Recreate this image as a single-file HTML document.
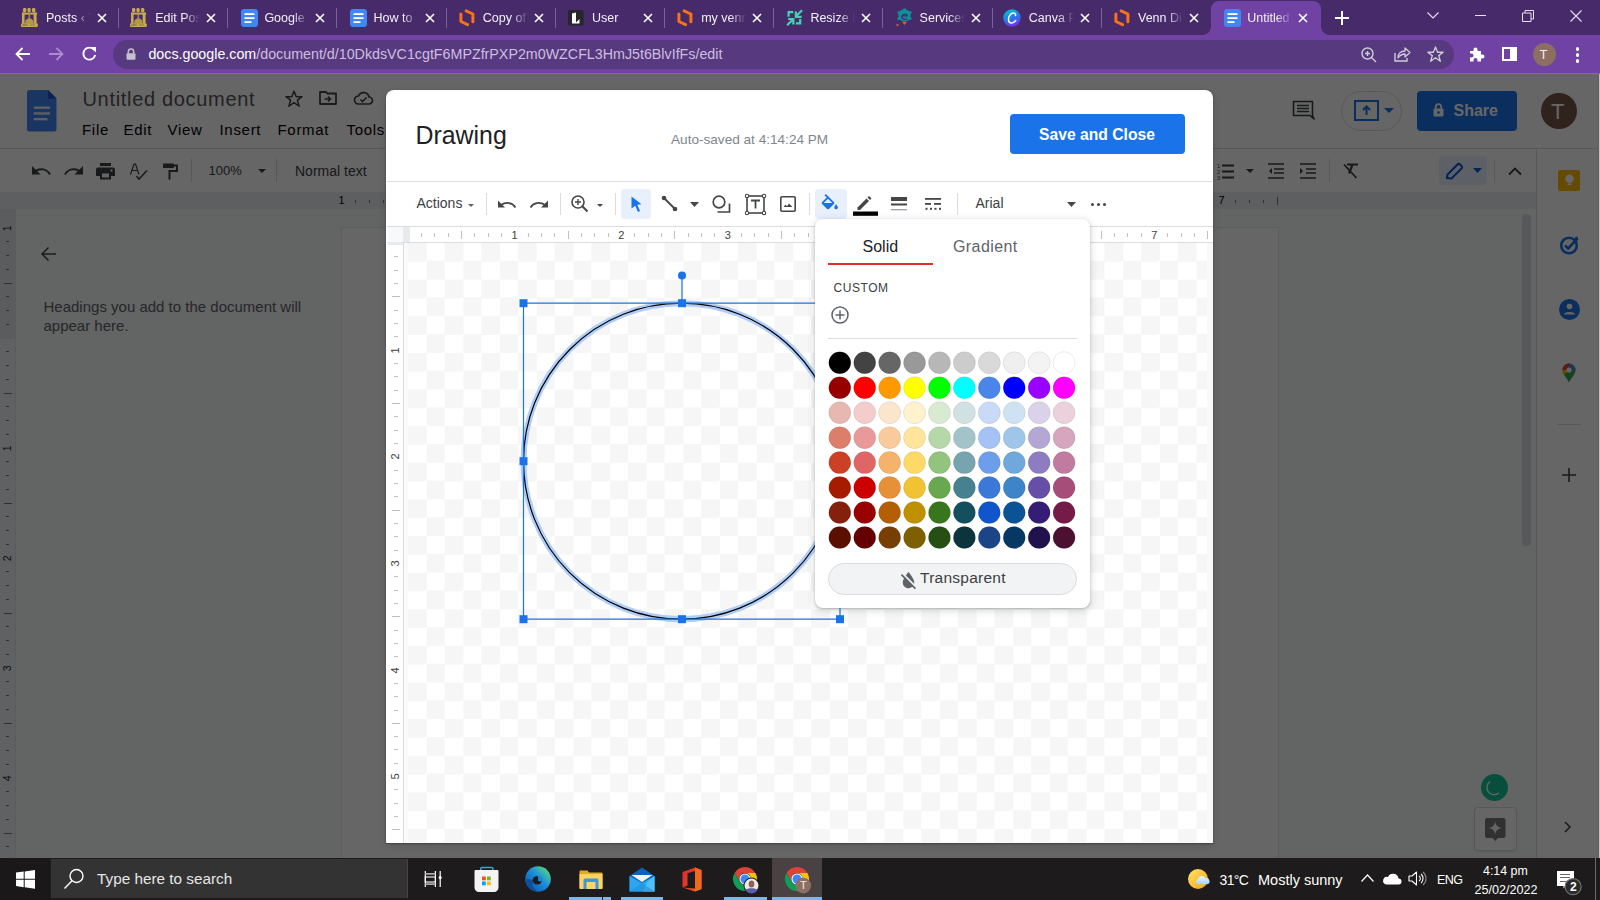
<!DOCTYPE html><html><head><meta charset="utf-8"><style>
*{margin:0;padding:0;box-sizing:border-box}
html,body{width:1600px;height:900px;overflow:hidden;background:#666}
body{position:relative;font-family:"Liberation Sans",sans-serif}
.a{position:absolute}
.t{position:absolute;white-space:nowrap;line-height:1}
svg{position:absolute;overflow:visible}
</style></head><body>
<div class="a" style="left:0;top:0;width:1600px;height:35px;background:#462a69"></div>
<div class="a" style="left:0;top:35px;width:1600px;height:39px;background:#6f42a4"></div>
<div class="a" style="left:0;top:73px;width:1600px;height:1px;background:#8a62bd"></div>
<div class="a" style="left:1211px;top:1px;width:110px;height:35px;background:#6f42a4;border-radius:8px 8px 0 0"></div>
<div class="a" style="left:1203px;top:27px;width:8px;height:8px;background:radial-gradient(circle at 0 0,#462a69 7.5px,#6f42a4 8px)"></div>
<div class="a" style="left:1321px;top:27px;width:8px;height:8px;background:radial-gradient(circle at 100% 0,#462a69 7.5px,#6f42a4 8px)"></div>
<div class="t" style="left:46.0px;top:11px;width:47px;height:16px;overflow:hidden;color:#f4f0fa;font-size:12.5px;line-height:14px;-webkit-mask-image:linear-gradient(90deg,#000 62%,transparent 96%)">Posts ‹ T</div>
<svg style="left:97.0px;top:12.5px" width="10" height="10" viewBox="0 0 10 10"><path d="M1 1L9 9M9 1L1 9" stroke="#fff" stroke-width="1.6"/></svg>
<div class="a" style="left:118.0px;top:8px;width:1px;height:20px;background:#7a619a"></div>
<svg style="left:21.0px;top:8px" width="17" height="19" viewBox="0 0 17 19"><g fill="#c6ab4a"><rect x="2" y="0" width="3.3" height="4.2" rx="1.2"/><rect x="6.5" y="0" width="3.2" height="4.2" rx="1.2"/><rect x="11" y="0" width="3.3" height="4.2" rx="1.2"/><rect x="1" y="4.6" width="15" height="2"/><rect x="1" y="4.6" width="2.6" height="11"/><rect x="12.6" y="4.6" width="3" height="11"/><path d="M4.3 15.5V12.5Q8.3 7.5 12.2 12.5V15.5Z" fill="#b09848"/><rect x="7.5" y="6" width="1.6" height="4" fill="#9a8650"/><rect x="0" y="15.3" width="16.8" height="3.7" rx="1"/></g><rect x="1.3" y="16.5" width="5.5" height="1" fill="#6a5a6a"/><rect x="9" y="16.5" width="5" height="1" fill="#8a7a5a"/></svg>
<div class="t" style="left:155.2px;top:11px;width:47px;height:16px;overflow:hidden;color:#f4f0fa;font-size:12.5px;line-height:14px;-webkit-mask-image:linear-gradient(90deg,#000 62%,transparent 96%)">Edit Post</div>
<svg style="left:206.2px;top:12.5px" width="10" height="10" viewBox="0 0 10 10"><path d="M1 1L9 9M9 1L1 9" stroke="#fff" stroke-width="1.6"/></svg>
<div class="a" style="left:227.2px;top:8px;width:1px;height:20px;background:#7a619a"></div>
<svg style="left:130.2px;top:8px" width="17" height="19" viewBox="0 0 17 19"><g fill="#c6ab4a"><rect x="2" y="0" width="3.3" height="4.2" rx="1.2"/><rect x="6.5" y="0" width="3.2" height="4.2" rx="1.2"/><rect x="11" y="0" width="3.3" height="4.2" rx="1.2"/><rect x="1" y="4.6" width="15" height="2"/><rect x="1" y="4.6" width="2.6" height="11"/><rect x="12.6" y="4.6" width="3" height="11"/><path d="M4.3 15.5V12.5Q8.3 7.5 12.2 12.5V15.5Z" fill="#b09848"/><rect x="7.5" y="6" width="1.6" height="4" fill="#9a8650"/><rect x="0" y="15.3" width="16.8" height="3.7" rx="1"/></g><rect x="1.3" y="16.5" width="5.5" height="1" fill="#6a5a6a"/><rect x="9" y="16.5" width="5" height="1" fill="#8a7a5a"/></svg>
<div class="t" style="left:264.4px;top:11px;width:47px;height:16px;overflow:hidden;color:#f4f0fa;font-size:12.5px;line-height:14px;-webkit-mask-image:linear-gradient(90deg,#000 62%,transparent 96%)">Google Docs</div>
<svg style="left:315.4px;top:12.5px" width="10" height="10" viewBox="0 0 10 10"><path d="M1 1L9 9M9 1L1 9" stroke="#fff" stroke-width="1.6"/></svg>
<div class="a" style="left:336.4px;top:8px;width:1px;height:20px;background:#7a619a"></div>
<svg style="left:240.9px;top:9px" width="17" height="18" viewBox="0 0 17 18"><rect x="0" y="0" width="17" height="18" rx="3" fill="#4285f4"/><rect x="3.5" y="4.2" width="10" height="1.8" fill="#fff"/><rect x="3.5" y="8.2" width="10" height="1.8" fill="#fff"/><rect x="3.5" y="12.2" width="7" height="1.8" fill="#fff"/></svg>
<div class="t" style="left:373.6px;top:11px;width:47px;height:16px;overflow:hidden;color:#f4f0fa;font-size:12.5px;line-height:14px;-webkit-mask-image:linear-gradient(90deg,#000 62%,transparent 96%)">How to</div>
<svg style="left:424.6px;top:12.5px" width="10" height="10" viewBox="0 0 10 10"><path d="M1 1L9 9M9 1L1 9" stroke="#fff" stroke-width="1.6"/></svg>
<div class="a" style="left:445.6px;top:8px;width:1px;height:20px;background:#7a619a"></div>
<svg style="left:350.1px;top:9px" width="17" height="18" viewBox="0 0 17 18"><rect x="0" y="0" width="17" height="18" rx="3" fill="#4285f4"/><rect x="3.5" y="4.2" width="10" height="1.8" fill="#fff"/><rect x="3.5" y="8.2" width="10" height="1.8" fill="#fff"/><rect x="3.5" y="12.2" width="7" height="1.8" fill="#fff"/></svg>
<div class="t" style="left:482.8px;top:11px;width:47px;height:16px;overflow:hidden;color:#f4f0fa;font-size:12.5px;line-height:14px;-webkit-mask-image:linear-gradient(90deg,#000 62%,transparent 96%)">Copy of Venn</div>
<svg style="left:533.8px;top:12.5px" width="10" height="10" viewBox="0 0 10 10"><path d="M1 1L9 9M9 1L1 9" stroke="#fff" stroke-width="1.6"/></svg>
<div class="a" style="left:554.8px;top:8px;width:1px;height:20px;background:#7a619a"></div>
<svg style="left:457.8px;top:9px" width="17" height="18" viewBox="0 0 17 18"><path d="M2.9 5V12.5L9.6 15.6M8.1 1.9L14.9 5V12.8" fill="none" stroke="#f97316" stroke-width="3" stroke-linecap="round" stroke-linejoin="round"/></svg>
<div class="t" style="left:592.0px;top:11px;width:47px;height:16px;overflow:hidden;color:#f4f0fa;font-size:12.5px;line-height:14px;-webkit-mask-image:linear-gradient(90deg,#000 62%,transparent 96%)">User</div>
<svg style="left:643.0px;top:12.5px" width="10" height="10" viewBox="0 0 10 10"><path d="M1 1L9 9M9 1L1 9" stroke="#fff" stroke-width="1.6"/></svg>
<div class="a" style="left:664.0px;top:8px;width:1px;height:20px;background:#7a619a"></div>
<svg style="left:567.5px;top:10px" width="16" height="16" viewBox="0 0 16 16"><rect width="15.6" height="15.5" rx="2.5" fill="#25272a"/><path d="M4 3.5L8 2.5V13.5H4Z" fill="#fff"/><path d="M8 12.5L11.5 9V13.5H8Z" fill="#fff"/></svg>
<div class="t" style="left:701.2px;top:11px;width:47px;height:16px;overflow:hidden;color:#f4f0fa;font-size:12.5px;line-height:14px;-webkit-mask-image:linear-gradient(90deg,#000 62%,transparent 96%)">my venn dia</div>
<svg style="left:752.2px;top:12.5px" width="10" height="10" viewBox="0 0 10 10"><path d="M1 1L9 9M9 1L1 9" stroke="#fff" stroke-width="1.6"/></svg>
<div class="a" style="left:773.2px;top:8px;width:1px;height:20px;background:#7a619a"></div>
<svg style="left:676.2px;top:9px" width="17" height="18" viewBox="0 0 17 18"><path d="M2.9 5V12.5L9.6 15.6M8.1 1.9L14.9 5V12.8" fill="none" stroke="#f97316" stroke-width="3" stroke-linecap="round" stroke-linejoin="round"/></svg>
<div class="t" style="left:810.4px;top:11px;width:47px;height:16px;overflow:hidden;color:#f4f0fa;font-size:12.5px;line-height:14px;-webkit-mask-image:linear-gradient(90deg,#000 62%,transparent 96%)">Resize Image</div>
<svg style="left:861.4px;top:12.5px" width="10" height="10" viewBox="0 0 10 10"><path d="M1 1L9 9M9 1L1 9" stroke="#fff" stroke-width="1.6"/></svg>
<div class="a" style="left:882.4px;top:8px;width:1px;height:20px;background:#7a619a"></div>
<svg style="left:785.4px;top:9px" width="18" height="18" viewBox="0 0 18 18"><path d="M3.6 7.8V3.1H8.35M17.1 1.25L11.5 6.8M10.85 2.5V7.8H16.6M2.1 16.25L7.6 10.75M3.1 10H8.35V15.5M15.2 10V14.4H10.85" fill="none" stroke="#44d2b0" stroke-width="2.2"/></svg>
<div class="t" style="left:919.6px;top:11px;width:47px;height:16px;overflow:hidden;color:#f4f0fa;font-size:12.5px;line-height:14px;-webkit-mask-image:linear-gradient(90deg,#000 62%,transparent 96%)">Services</div>
<svg style="left:970.6px;top:12.5px" width="10" height="10" viewBox="0 0 10 10"><path d="M1 1L9 9M9 1L1 9" stroke="#fff" stroke-width="1.6"/></svg>
<div class="a" style="left:991.6px;top:8px;width:1px;height:20px;background:#7a619a"></div>
<svg style="left:894.6px;top:8px" width="17" height="19" viewBox="0 0 17 19"><circle cx="9.5" cy="7.5" r="6.2" fill="#0e8f9a"/><circle cx="9.5" cy="1.8" r="1.6" fill="#0e8f9a"/><circle cx="4" cy="4.5" r="1.6" fill="#0e8f9a"/><circle cx="15" cy="4.5" r="1.6" fill="#0e8f9a"/><circle cx="4" cy="10.5" r="1.6" fill="#0e8f9a"/><circle cx="15" cy="10.5" r="1.6" fill="#0e8f9a"/><path d="M6.5 7.8H12.5M12.5 7.8A3 2.5 0 1 0 12 10.5" fill="none" stroke="#452a69" stroke-width="1.3"/><path d="M7 14H12L9.5 17Z" fill="#e55a2b"/><circle cx="2.5" cy="17" r="1.2" fill="#c05a3a"/></svg>
<div class="t" style="left:1028.8px;top:11px;width:47px;height:16px;overflow:hidden;color:#f4f0fa;font-size:12.5px;line-height:14px;-webkit-mask-image:linear-gradient(90deg,#000 62%,transparent 96%)">Canva Pro</div>
<svg style="left:1079.8px;top:12.5px" width="10" height="10" viewBox="0 0 10 10"><path d="M1 1L9 9M9 1L1 9" stroke="#fff" stroke-width="1.6"/></svg>
<div class="a" style="left:1100.8px;top:8px;width:1px;height:20px;background:#7a619a"></div>
<svg style="left:1002.8px;top:9px" width="18" height="18" viewBox="0 0 18 18"><defs><linearGradient id="cg" x1="0.3" y1="0" x2="0.7" y2="1"><stop offset="0" stop-color="#00c4cc"/><stop offset="0.55" stop-color="#2f6ff0"/><stop offset="1" stop-color="#7d2ae8"/></linearGradient></defs><circle cx="9" cy="9" r="8.7" fill="url(#cg)"/><path d="M12.5 6.5C13 4.5 11.5 4 10.5 4C7.5 4 5.5 7.5 5.5 10.5C5.5 12.5 6.5 14 8.5 14C10.5 14 12 12.5 12.8 11.5" fill="none" stroke="#fff" stroke-width="1.5" stroke-linecap="round"/></svg>
<div class="t" style="left:1138.0px;top:11px;width:47px;height:16px;overflow:hidden;color:#f4f0fa;font-size:12.5px;line-height:14px;-webkit-mask-image:linear-gradient(90deg,#000 62%,transparent 96%)">Venn Diagram</div>
<svg style="left:1189.0px;top:12.5px" width="10" height="10" viewBox="0 0 10 10"><path d="M1 1L9 9M9 1L1 9" stroke="#fff" stroke-width="1.6"/></svg>
<svg style="left:1113.0px;top:9px" width="17" height="18" viewBox="0 0 17 18"><path d="M2.9 5V12.5L9.6 15.6M8.1 1.9L14.9 5V12.8" fill="none" stroke="#f97316" stroke-width="3" stroke-linecap="round" stroke-linejoin="round"/></svg>
<div class="t" style="left:1247.2px;top:11px;width:47px;height:16px;overflow:hidden;color:#f4f0fa;font-size:12.5px;line-height:14px;-webkit-mask-image:linear-gradient(90deg,#000 62%,transparent 96%)">Untitled document</div>
<svg style="left:1298.2px;top:12.5px" width="10" height="10" viewBox="0 0 10 10"><path d="M1 1L9 9M9 1L1 9" stroke="#fff" stroke-width="1.6"/></svg>
<svg style="left:1223.7px;top:9px" width="17" height="18" viewBox="0 0 17 18"><rect x="0" y="0" width="17" height="18" rx="3" fill="#4285f4"/><rect x="3.5" y="4.2" width="10" height="1.8" fill="#fff"/><rect x="3.5" y="8.2" width="10" height="1.8" fill="#fff"/><rect x="3.5" y="12.2" width="7" height="1.8" fill="#fff"/></svg>
<svg style="left:1335px;top:11px" width="14" height="14" viewBox="0 0 14 14"><path d="M7 0V14M0 7H14" stroke="#fff" stroke-width="2"/></svg>
<svg style="left:1427px;top:12px" width="12" height="7" viewBox="0 0 12 7"><path d="M0.5 0.5L6 6L11.5 0.5" fill="none" stroke="#e8e0f0" stroke-width="1.1"/></svg>
<div class="a" style="left:1475px;top:14.5px;width:10.5px;height:1.6px;background:#e8e0f0"></div>
<svg style="left:1522px;top:9.5px" width="12" height="12" viewBox="0 0 12 12"><path d="M0.5 3H9V11.5H0.5Z M3 3V0.5H11.5V9H9" fill="none" stroke="#e8e0f0" stroke-width="1"/></svg>
<svg style="left:1570px;top:9.5px" width="12" height="12" viewBox="0 0 12 12"><path d="M0.5 0.5L11.5 11.5M11.5 0.5L0.5 11.5" fill="none" stroke="#e8e0f0" stroke-width="1.1"/></svg>
<svg style="left:15px;top:46.5px" width="15" height="14" viewBox="0 0 15 14"><path d="M15 7H2M7.5 1L1.5 7L7.5 13" fill="none" stroke="#fff" stroke-width="1.8"/></svg>
<svg style="left:49px;top:46.5px" width="15" height="14" viewBox="0 0 15 14"><path d="M0 7H13M7.5 1L13.5 7L7.5 13" fill="none" stroke="#a98bd0" stroke-width="1.8"/></svg>
<svg style="left:82px;top:46px" width="15" height="15" viewBox="0 0 15 15"><path d="M12.3 4.2A6 6 0 1 0 13.2 9" fill="none" stroke="#fff" stroke-width="1.8"/><path d="M8.5 1H14V6.5Z" fill="#fff"/></svg>
<div class="a" style="left:112.5px;top:40px;width:1341.5px;height:28.5px;background:#56397e;border-radius:14.25px"></div>
<svg style="left:126px;top:48px" width="10" height="12" viewBox="0 0 10 12"><path d="M2.3 5.5V3.8A2.7 2.7 0 0 1 7.7 3.8V5.5" fill="none" stroke="#c6c2cc" stroke-width="1.5"/><rect x="0.5" y="5.3" width="9" height="6.5" rx="1" fill="#c6c2cc"/></svg>
<div class="t" style="left:148.4px;top:46.5px;font-size:14.27px;color:#fff;letter-spacing:0px" id="url"><span style="color:#fff">docs.google.com</span><span style="color:#cdbfe0">/document/d/10DkdsVC1cgtF6MPZfrPXP2m0WZCFL3HmJ5t6BlvIfFs/edit</span></div>
<svg style="left:1361px;top:47px" width="16" height="16" viewBox="0 0 16 16"><circle cx="6.5" cy="6.5" r="5.5" fill="none" stroke="#d0ccd8" stroke-width="1.4"/><path d="M10.5 10.5L15 15M6.5 4V9M4 6.5H9" stroke="#d0ccd8" stroke-width="1.4"/></svg>
<svg style="left:1394px;top:46px" width="17" height="16" viewBox="0 0 17 16"><path d="M1 7V15H13V12" fill="none" stroke="#d0ccd8" stroke-width="1.4"/><path d="M4 12C4 7 7 5 11 5V2L16 6.5L11 11V8C8 8 6 9 4 12Z" fill="none" stroke="#d0ccd8" stroke-width="1.3" stroke-linejoin="round"/></svg>
<svg style="left:1427px;top:46px" width="17" height="16" viewBox="0 0 24 23"><path d="M12 1.5L15 9H23L16.6 13.8L19 22L12 17L5 22L7.4 13.8L1 9H9Z" fill="none" stroke="#d0ccd8" stroke-width="1.9" stroke-linejoin="round"/></svg>
<svg style="left:1469px;top:46px" width="16" height="16" viewBox="0 0 16 16"><path d="M1 5H4.5V3.5A2 2 0 0 1 8.5 3.5V5H12V8.5H13.5A2 2 0 0 1 13.5 12.5H12V15.5H8.5V14A2 2 0 0 0 4.5 14V15.5H1V11.5H2.5A2 2 0 0 0 2.5 7.5H1Z" fill="#fff"/></svg>
<svg style="left:1502px;top:47px" width="15" height="14" viewBox="0 0 15 14"><rect x="1" y="1" width="13" height="12" fill="none" stroke="#fff" stroke-width="2"/><rect x="8" y="1" width="6" height="12" fill="#fff"/></svg>
<div class="a" style="left:1532.5px;top:42.5px;width:23px;height:23px;border-radius:50%;background:#8d6e63"></div>
<div class="t" style="left:1539.5px;top:47.5px;font-size:13px;color:#f2ece8">T</div>
<div class="a" style="left:1575.5px;top:47px;width:3.5px;height:3.5px;border-radius:50%;background:#fff;box-shadow:0 6px 0 #fff,0 12px 0 #fff"></div>
<div class="a" style="left:0;top:74px;width:1600px;height:784px;background:#f8f9fa"></div>
<div class="a" style="left:0;top:74px;width:1600px;height:74px;background:#fff"></div>
<div class="a" style="left:0;top:148px;width:1600px;height:1px;background:#dadce0"></div>
<div class="a" style="left:0;top:149px;width:1536px;height:43px;background:#fff"></div>
<svg style="left:26.5px;top:90px" width="30" height="42" viewBox="0 0 30 42"><path d="M2.5 0H21L29.5 8.5V39A2.5 2.5 0 0 1 27 41.5H2.5A2.5 2.5 0 0 1 0 39V2.5A2.5 2.5 0 0 1 2.5 0Z" fill="#4285f4"/><path d="M21 0V8.5H29.5Z" fill="#1a56c9"/><rect x="6.7" y="16.5" width="16.2" height="2.3" fill="#f1f1f1"/><rect x="6.7" y="22.3" width="16.2" height="2.3" fill="#f1f1f1"/><rect x="6.7" y="28" width="13.8" height="2.3" fill="#f1f1f1"/></svg>
<div class="t" style="left:82.5px;top:89px;font-size:20px;letter-spacing:0.68px;color:#555" id="doctitle">Untitled document</div>
<svg style="left:285px;top:89.5px" width="18" height="17" viewBox="0 0 24 23"><path d="M12 1.5L15 9H23L16.6 13.8L19 22L12 17L5 22L7.4 13.8L1 9H9Z" fill="none" stroke="#444" stroke-width="2" stroke-linejoin="round"/></svg>
<svg style="left:319px;top:91px" width="18" height="14" viewBox="0 0 18 14"><path d="M1 1H7L8.5 2.5H17V13H1Z" fill="none" stroke="#444" stroke-width="1.8" stroke-linejoin="round"/><path d="M5.5 8H11.5M9 5.5L11.5 8L9 10.5" fill="none" stroke="#444" stroke-width="1.6"/></svg>
<svg style="left:353.5px;top:92px" width="19" height="13" viewBox="0 0 19 13"><path d="M4.5 12H15A3.5 3.5 0 0 0 15 5A5.5 5.5 0 0 0 4.5 4A4 4 0 0 0 4.5 12Z" fill="none" stroke="#444" stroke-width="1.7"/><path d="M6.5 7.5L8.5 9.5L12.5 5.5" fill="none" stroke="#444" stroke-width="1.6"/></svg>
<div class="t" style="left:82px;top:122px;font-size:15px;letter-spacing:0.7px;color:#000">File</div>
<div class="t" style="left:123.5px;top:122px;font-size:15px;letter-spacing:0.7px;color:#000">Edit</div>
<div class="t" style="left:167.5px;top:122px;font-size:15px;letter-spacing:0.7px;color:#000">View</div>
<div class="t" style="left:219.5px;top:122px;font-size:15px;letter-spacing:0.7px;color:#000">Insert</div>
<div class="t" style="left:277.5px;top:122px;font-size:15px;letter-spacing:0.7px;color:#000">Format</div>
<div class="t" style="left:346.5px;top:122px;font-size:15px;letter-spacing:0.7px;color:#000">Tools</div>
<svg style="left:1292px;top:100px" width="22" height="20" viewBox="0 0 22 20"><path d="M1.5 1.5H20.5V15.5L22 19L18 15.5H1.5Z" fill="none" stroke="#3c4043" stroke-width="1.6" stroke-linejoin="round"/><path d="M5 5.5H17M5 8.5H17M5 11.5H17" stroke="#3c4043" stroke-width="1.6"/></svg>
<div class="a" style="left:1341px;top:90.5px;width:61px;height:40px;border:1px solid #dadce0;border-radius:20px"></div>
<svg style="left:1354px;top:100px" width="25" height="21" viewBox="0 0 25 21"><rect x="1" y="1" width="23" height="19" fill="none" stroke="#1a73e8" stroke-width="2"/><path d="M12.5 15V7M9 10L12.5 6.5L16 10" fill="none" stroke="#1a73e8" stroke-width="2"/></svg>
<svg style="left:1384px;top:108px" width="10" height="5" viewBox="0 0 10 5"><path d="M0 0H10L5 5Z" fill="#1a73e8"/></svg>
<div class="a" style="left:1417px;top:91px;width:100px;height:40px;background:#1a73e8;border-radius:4px"></div>
<svg style="left:1433px;top:102px" width="11" height="15" viewBox="0 0 11 15"><path d="M2.8 7V4.8A2.7 2.7 0 0 1 8.2 4.8V7" fill="none" stroke="#fff" stroke-width="1.8"/><rect x="0.5" y="6.5" width="10" height="8" rx="1" fill="#fff"/><circle cx="5.5" cy="10.5" r="1.3" fill="#1a73e8"/></svg>
<div class="t" style="left:1453.5px;top:103px;font-size:16px;color:#fff;font-weight:bold" id="share">Share</div>
<div class="a" style="left:1541px;top:92.5px;width:36px;height:36px;border-radius:50%;background:#795548"></div>
<div class="t" style="left:1551px;top:100.5px;font-size:22px;color:#fff">T</div>
<svg style="left:31.5px;top:165.5px" width="19" height="9" viewBox="0 0 19 9"><path d="M18 8.5C15 3 8 1.5 3 5.5" fill="none" stroke="#3c4043" stroke-width="1.9"/><path d="M0 0V8.5H8.5Z" fill="#3c4043"/></svg>
<svg style="left:64px;top:165.5px" width="19" height="9" viewBox="0 0 19 9"><path d="M1 8.5C4 3 11 1.5 16 5.5" fill="none" stroke="#3c4043" stroke-width="1.9"/><path d="M19 0V8.5H10.5Z" fill="#3c4043"/></svg>
<svg style="left:96px;top:163px" width="19" height="17" viewBox="0 0 19 17"><rect x="4" y="0" width="11" height="3" fill="#3c4043"/><path d="M2 4.5H17A2 2 0 0 1 19 6.5V13H15V16.5H4V13H0V6.5A2 2 0 0 1 2 4.5Z" fill="#3c4043"/><rect x="6" y="10.5" width="7" height="4" fill="#fff"/><rect x="14.5" y="6.5" width="2" height="2" fill="#fff"/></svg>
<svg style="left:130px;top:163px" width="18" height="18" viewBox="0 0 18 18"><path d="M0.5 11.5L4 1H5.5L9 11.5M2 7.5H7.5" fill="none" stroke="#3c4043" stroke-width="1.2"/><path d="M6.5 13L9 16L17 7.5" fill="none" stroke="#3c4043" stroke-width="1.5"/></svg>
<svg style="left:162.5px;top:163px" width="16" height="17" viewBox="0 0 16 17"><rect x="0" y="0.5" width="11" height="4.5" rx="0.7" fill="#3c4043"/><path d="M11 2.5H14V8H6.5V16.5" fill="none" stroke="#3c4043" stroke-width="2"/></svg>
<div class="a" style="left:191px;top:159px;width:1px;height:23px;background:#dadce0"></div>
<div class="t" style="left:208.5px;top:164px;font-size:13px;color:#3c4043" id="zoompct">100%</div>
<svg style="left:257.5px;top:169px" width="8" height="4" viewBox="0 0 8 4"><path d="M0 0H8L4 4Z" fill="#3c4043"/></svg>
<div class="a" style="left:275.5px;top:159px;width:1px;height:23px;background:#dadce0"></div>
<div class="t" style="left:295px;top:164px;font-size:14px;color:#3c4043" id="normtext">Normal text</div>
<svg style="left:1217px;top:163px" width="17" height="17" viewBox="0 0 17 17"><path d="M5 2.5H17M5 8.5H17M5 14.5H17" stroke="#3c4043" stroke-width="1.8"/><text x="0" y="5" font-size="5.5" font-family="Liberation Sans" fill="#3c4043">1</text><text x="0" y="11" font-size="5.5" font-family="Liberation Sans" fill="#3c4043">2</text><text x="0" y="17" font-size="5.5" font-family="Liberation Sans" fill="#3c4043">3</text></svg>
<svg style="left:1246px;top:169px" width="8" height="4" viewBox="0 0 8 4"><path d="M0 0H8L4 4Z" fill="#3c4043"/></svg>
<svg style="left:1268px;top:163px" width="16" height="16" viewBox="0 0 16 16"><path d="M0 1H16M6 6H16M6 10H16M0 15H16" stroke="#3c4043" stroke-width="1.7"/><path d="M4 5V11L1 8Z" fill="#3c4043"/></svg>
<svg style="left:1300px;top:163px" width="16" height="16" viewBox="0 0 16 16"><path d="M0 1H16M6 6H16M6 10H16M0 15H16" stroke="#3c4043" stroke-width="1.7"/><path d="M0 5V11L3 8Z" fill="#3c4043"/></svg>
<div class="a" style="left:1329px;top:159px;width:1px;height:23px;background:#dadce0"></div>
<svg style="left:1343px;top:163px" width="16" height="16" viewBox="0 0 16 16"><path d="M4 1.5H15M9.5 1.5L6 10.5" stroke="#3c4043" stroke-width="2.2"/><path d="M1 1.5L13.5 15" stroke="#3c4043" stroke-width="1.8"/></svg>
<div class="a" style="left:1438.5px;top:155.5px;width:48px;height:29px;background:#e8f0fe;border-radius:4px"></div>
<svg style="left:1446px;top:162.5px" width="17" height="16" viewBox="0 0 17 16"><path d="M1 15L1.5 11.5L11.5 1.5A1.5 1.5 0 0 1 14 1.5L15.5 3A1.5 1.5 0 0 1 15.5 5.5L5.5 15.5Z" fill="none" stroke="#0b57d0" stroke-width="2"/></svg>
<svg style="left:1473px;top:168px" width="9" height="5" viewBox="0 0 9 5"><path d="M0 0H9L4.5 5Z" fill="#0b57d0"/></svg>
<div class="a" style="left:1493.5px;top:159.5px;width:1px;height:23px;background:#dadce0"></div>
<svg style="left:1508px;top:166.5px" width="14" height="8" viewBox="0 0 14 8"><path d="M1 7.5L7 1.5L13 7.5" fill="none" stroke="#3c4043" stroke-width="1.9"/></svg>
<div class="a" style="left:0;top:192px;width:1536px;height:16.5px;background:#eaedf0"></div>
<div class="t" style="left:338.4px;top:195px;font-size:11px;color:#000">1</div>
<div class="t" style="left:1218.4px;top:195px;font-size:11px;color:#000">7</div>
<div class="a" style="left:355.15px;top:199.5px;width:1px;height:3px;background:#777"></div>
<div class="a" style="left:368.9px;top:199.5px;width:1px;height:3px;background:#777"></div>
<div class="a" style="left:382.65px;top:199.5px;width:1px;height:3px;background:#777"></div>
<div class="a" style="left:1235.15px;top:199.5px;width:1px;height:3px;background:#777"></div>
<div class="a" style="left:1248.9px;top:199.5px;width:1px;height:3px;background:#777"></div>
<div class="a" style="left:1262.65px;top:199.5px;width:1px;height:3px;background:#777"></div>
<div class="a" style="left:1276.5px;top:197px;width:1px;height:8px;background:#777"></div>
<div class="a" style="left:0;top:208.5px;width:16px;height:650px;background:#f1f3f4;border-right:1px solid #e3e5e8"></div>
<div class="a" style="left:0;top:208.5px;width:15px;height:130px;background:#e4e6e9"></div>
<div class="t" style="left:2px;top:222.5px;font-size:10.5px;color:#222;transform:rotate(-90deg);width:11px;text-align:center">1</div>
<div class="a" style="left:5.5px;top:241.2px;width:3.5px;height:1px;background:#777"></div>
<div class="a" style="left:5.5px;top:255.0px;width:3.5px;height:1px;background:#777"></div>
<div class="a" style="left:5.5px;top:268.8px;width:3.5px;height:1px;background:#777"></div>
<div class="a" style="left:3.5px;top:282.5px;width:8px;height:1px;background:#777"></div>
<div class="a" style="left:5.5px;top:296.2px;width:3.5px;height:1px;background:#777"></div>
<div class="a" style="left:5.5px;top:310.0px;width:3.5px;height:1px;background:#777"></div>
<div class="a" style="left:5.5px;top:323.8px;width:3.5px;height:1px;background:#777"></div>
<div class="a" style="left:5.5px;top:351.2px;width:3.5px;height:1px;background:#777"></div>
<div class="a" style="left:5.5px;top:365.0px;width:3.5px;height:1px;background:#777"></div>
<div class="a" style="left:5.5px;top:378.8px;width:3.5px;height:1px;background:#777"></div>
<div class="a" style="left:3.5px;top:392.5px;width:8px;height:1px;background:#777"></div>
<div class="a" style="left:5.5px;top:406.2px;width:3.5px;height:1px;background:#777"></div>
<div class="a" style="left:5.5px;top:420.0px;width:3.5px;height:1px;background:#777"></div>
<div class="a" style="left:5.5px;top:433.8px;width:3.5px;height:1px;background:#777"></div>
<div class="t" style="left:2px;top:442.5px;font-size:10.5px;color:#222;transform:rotate(-90deg);width:11px;text-align:center">1</div>
<div class="a" style="left:5.5px;top:461.2px;width:3.5px;height:1px;background:#777"></div>
<div class="a" style="left:5.5px;top:475.0px;width:3.5px;height:1px;background:#777"></div>
<div class="a" style="left:5.5px;top:488.8px;width:3.5px;height:1px;background:#777"></div>
<div class="a" style="left:3.5px;top:502.5px;width:8px;height:1px;background:#777"></div>
<div class="a" style="left:5.5px;top:516.2px;width:3.5px;height:1px;background:#777"></div>
<div class="a" style="left:5.5px;top:530.0px;width:3.5px;height:1px;background:#777"></div>
<div class="a" style="left:5.5px;top:543.8px;width:3.5px;height:1px;background:#777"></div>
<div class="t" style="left:2px;top:552.5px;font-size:10.5px;color:#222;transform:rotate(-90deg);width:11px;text-align:center">2</div>
<div class="a" style="left:5.5px;top:571.2px;width:3.5px;height:1px;background:#777"></div>
<div class="a" style="left:5.5px;top:585.0px;width:3.5px;height:1px;background:#777"></div>
<div class="a" style="left:5.5px;top:598.8px;width:3.5px;height:1px;background:#777"></div>
<div class="a" style="left:3.5px;top:612.5px;width:8px;height:1px;background:#777"></div>
<div class="a" style="left:5.5px;top:626.2px;width:3.5px;height:1px;background:#777"></div>
<div class="a" style="left:5.5px;top:640.0px;width:3.5px;height:1px;background:#777"></div>
<div class="a" style="left:5.5px;top:653.8px;width:3.5px;height:1px;background:#777"></div>
<div class="t" style="left:2px;top:662.5px;font-size:10.5px;color:#222;transform:rotate(-90deg);width:11px;text-align:center">3</div>
<div class="a" style="left:5.5px;top:681.2px;width:3.5px;height:1px;background:#777"></div>
<div class="a" style="left:5.5px;top:695.0px;width:3.5px;height:1px;background:#777"></div>
<div class="a" style="left:5.5px;top:708.8px;width:3.5px;height:1px;background:#777"></div>
<div class="a" style="left:3.5px;top:722.5px;width:8px;height:1px;background:#777"></div>
<div class="a" style="left:5.5px;top:736.2px;width:3.5px;height:1px;background:#777"></div>
<div class="a" style="left:5.5px;top:750.0px;width:3.5px;height:1px;background:#777"></div>
<div class="a" style="left:5.5px;top:763.8px;width:3.5px;height:1px;background:#777"></div>
<div class="t" style="left:2px;top:772.5px;font-size:10.5px;color:#222;transform:rotate(-90deg);width:11px;text-align:center">4</div>
<div class="a" style="left:5.5px;top:791.2px;width:3.5px;height:1px;background:#777"></div>
<div class="a" style="left:5.5px;top:805.0px;width:3.5px;height:1px;background:#777"></div>
<div class="a" style="left:5.5px;top:818.8px;width:3.5px;height:1px;background:#777"></div>
<div class="a" style="left:3.5px;top:832.5px;width:8px;height:1px;background:#777"></div>
<div class="a" style="left:5.5px;top:846.2px;width:3.5px;height:1px;background:#777"></div>
<div class="a" style="left:342px;top:227.5px;width:935.5px;height:640px;background:#fff;box-shadow:0 0 0 1px #e6e8eb"></div>
<svg style="left:40px;top:246px" width="16" height="16" viewBox="0 0 16 16"><path d="M16 8H2M8.5 1.5L2 8L8.5 14.5" fill="none" stroke="#444" stroke-width="1.5"/></svg>
<div class="t" style="left:43.5px;top:296.5px;font-size:15px;line-height:19.5px;color:#5f6368;white-space:normal;width:290px" id="headings">Headings you add to the document will appear here.</div>
<div class="a" style="left:1536px;top:149px;width:64px;height:709px;background:#fff;border-left:1px solid #dadce0"></div>
<div class="a" style="left:1598px;top:74px;width:2px;height:784px;background:#f1f3f4"></div>
<div class="a" style="left:1558px;top:169.5px;width:22px;height:21.5px;border-radius:2px;background:#fbbc04"></div>
<svg style="left:1563.5px;top:174px" width="11" height="13" viewBox="0 0 11 13"><circle cx="5.5" cy="4.8" r="4.3" fill="#fff"/><rect x="3.5" y="9.5" width="4" height="1.6" fill="#fff"/></svg>
<svg style="left:1558.5px;top:234.5px" width="21" height="20" viewBox="0 0 21 20"><circle cx="10" cy="10.5" r="7.8" fill="none" stroke="#1a73e8" stroke-width="2.6"/><path d="M6 10.5L9.2 13.5L18.5 3.5" fill="none" stroke="#1a73e8" stroke-width="2.6"/><circle cx="17.5" cy="3" r="1.6" fill="#1a73e8"/></svg>
<svg style="left:1558.5px;top:298.5px" width="21" height="21" viewBox="0 0 21 21"><circle cx="10.5" cy="10.5" r="10.5" fill="#1a73e8"/><circle cx="10.5" cy="7.5" r="2.8" fill="#fff"/><path d="M5 15.5C5 12 16 12 16 15.5Z" fill="#fff"/></svg>
<svg style="left:1562px;top:363px" width="14" height="20" viewBox="0 0 14 20"><path d="M7 19.5C5 15 0.5 11.5 0.5 7A6.5 6.5 0 0 1 13.5 7C13.5 11.5 9 15 7 19.5Z" fill="#34a853"/><path d="M0.5 7A6.5 6.5 0 0 1 7 0.5L7 7Z" fill="#ea4335"/><path d="M7 0.5A6.5 6.5 0 0 1 13.5 7H7Z" fill="#4285f4"/><path d="M0.5 7H7L2 12C1 10.5 0.5 9 0.5 7Z" fill="#fbbc04"/><circle cx="7" cy="7" r="2.6" fill="#fff"/></svg>
<div class="a" style="left:1557px;top:423.5px;width:24px;height:1px;background:#dadce0"></div>
<svg style="left:1562px;top:468px" width="14" height="14" viewBox="0 0 14 14"><path d="M7 0V14M0 7H14" stroke="#444" stroke-width="1.6"/></svg>
<div class="a" style="left:1522px;top:213.5px;width:8.5px;height:332px;border-radius:4px;background:#dadce0"></div>
<div class="a" style="left:1480.8px;top:773.6px;width:27.2px;height:27.2px;border-radius:50%;background:#15c39a"></div>
<svg style="left:1485px;top:778px" width="18" height="18" viewBox="0 0 18 18"><path d="M4.8 3.8A6.8 6.8 0 1 0 13.4 15.2" fill="none" stroke="#fff" stroke-width="1.3" stroke-linecap="round"/></svg>
<div class="a" style="left:1474.5px;top:808.3px;width:41px;height:41.7px;border-radius:3px;background:#fff;box-shadow:0 0 0 1px #dadce0,0 1px 2px rgba(0,0,0,.25)"></div>
<svg style="left:1485px;top:817.8px" width="21" height="24" viewBox="0 0 21 24"><path d="M2 0H18.5A2 2 0 0 1 20.5 2V18A2 2 0 0 1 18.5 20H13L10.2 23L7.5 20H2A2 2 0 0 1 0 18V2A2 2 0 0 1 2 0Z" fill="#7a7a7a"/><path d="M10.2 3.5Q10.9 9.3 16.5 10Q10.9 10.7 10.2 16.5Q9.5 10.7 4 10Q9.5 9.3 10.2 3.5Z" fill="#fff"/></svg>
<svg style="left:1564px;top:821px" width="7" height="12" viewBox="0 0 7 12"><path d="M1 1L6 6L1 11" fill="none" stroke="#3c4043" stroke-width="1.5"/></svg>
<div class="a" style="left:0;top:74px;width:1600px;height:784px;background:rgba(0,0,0,0.6)"></div>
<div class="a" style="left:1599px;top:74px;width:1px;height:784px;background:#c2c2c2"></div>
<div class="a" style="left:386px;top:90px;width:827px;height:752.5px;background:#fff;border-radius:8px 8px 1px 1px;box-shadow:0 1px 2px rgba(0,0,0,.3),0 2px 8px rgba(0,0,0,.12)"></div>
<div class="t" style="left:415.5px;top:123px;font-size:24.9px;color:#202124" id="drawing">Drawing</div>
<div class="t" style="left:671px;top:133px;font-size:13.6px;color:#80868b" id="autosaved">Auto-saved at 4:14:24 PM</div>
<div class="a" style="left:1010px;top:114px;width:175px;height:40px;background:#1a73e8;border-radius:4px"></div>
<div class="t" style="left:1039px;top:127px;font-size:15.7px;color:#fff;font-weight:bold" id="saveclose">Save and Close</div>
<div class="a" style="left:387px;top:180.5px;width:825px;height:1px;background:#dadce0"></div>
<div class="t" style="left:416.5px;top:196px;font-size:14px;color:#3c4043" id="actions">Actions</div>
<svg style="left:468px;top:203.5px" width="6" height="3" viewBox="0 0 6 3"><path d="M0 0H6L3 3Z" fill="#5f6368"/></svg>
<div class="a" style="left:485.5px;top:192.5px;width:1px;height:22.5px;background:#dadce0"></div>
<div class="a" style="left:559.5px;top:192.5px;width:1px;height:22.5px;background:#dadce0"></div>
<div class="a" style="left:615px;top:192.5px;width:1px;height:22.5px;background:#dadce0"></div>
<div class="a" style="left:808.5px;top:192.5px;width:1px;height:22.5px;background:#dadce0"></div>
<div class="a" style="left:956.5px;top:192.5px;width:1px;height:22.5px;background:#dadce0"></div>
<svg style="left:497.5px;top:200px" width="18" height="8" viewBox="0 0 18 8"><path d="M17.5 7.5C14.5 2.5 8 1.5 3 5" fill="none" stroke="#444746" stroke-width="1.8"/><path d="M0 0.5V7.5H7Z" fill="#444746"/></svg>
<svg style="left:529.5px;top:200px" width="18" height="8" viewBox="0 0 18 8"><path d="M0.5 7.5C3.5 2.5 10 1.5 15 5" fill="none" stroke="#444746" stroke-width="1.8"/><path d="M18 0.5V7.5H11Z" fill="#444746"/></svg>
<svg style="left:571px;top:195px" width="18" height="18" viewBox="0 0 18 18"><circle cx="7" cy="7" r="6" fill="none" stroke="#444746" stroke-width="1.6"/><path d="M11.3 11.3L16.5 16.5" stroke="#444746" stroke-width="2"/><path d="M7 4V10M4 7H10" stroke="#444746" stroke-width="1.4"/></svg>
<svg style="left:597px;top:204px" width="6" height="3" viewBox="0 0 6 3"><path d="M0 0H6L3 3Z" fill="#444746"/></svg>
<div class="a" style="left:621px;top:189px;width:30px;height:29.5px;background:#e8f0fe;border-radius:4px"></div>
<svg style="left:631px;top:196px" width="11" height="17" viewBox="0 0 11 17"><path d="M0.5 0.5L10.5 8.2L6.3 8.8L9 15L7 16L4.3 9.8L0.5 12.5Z" fill="#1a73e8"/></svg>
<svg style="left:661px;top:195px" width="17" height="17" viewBox="0 0 17 17"><path d="M3 3L14 14" stroke="#444746" stroke-width="1.8"/><circle cx="3" cy="3" r="2.3" fill="#444746"/><circle cx="14" cy="14" r="2.3" fill="#444746"/></svg>
<svg style="left:690px;top:202px" width="9" height="5" viewBox="0 0 9 5"><path d="M0 0H9L4.5 5Z" fill="#444746"/></svg>
<svg style="left:712px;top:194.5px" width="19" height="18" viewBox="0 0 19 18"><circle cx="7" cy="7" r="5.8" fill="none" stroke="#444746" stroke-width="1.7"/><path d="M17.5 8.5V17H5.5" fill="none" stroke="#444746" stroke-width="1.7"/></svg>
<svg style="left:745px;top:194px" width="21" height="21" viewBox="0 0 21 21"><rect x="2" y="2" width="17" height="17" fill="none" stroke="#444746" stroke-width="1.6"/><circle cx="2" cy="2" r="1.7" fill="#fff" stroke="#444746" stroke-width="1.1"/><circle cx="19" cy="2" r="1.7" fill="#fff" stroke="#444746" stroke-width="1.1"/><circle cx="2" cy="19" r="1.7" fill="#fff" stroke="#444746" stroke-width="1.1"/><circle cx="19" cy="19" r="1.7" fill="#fff" stroke="#444746" stroke-width="1.1"/><path d="M6 6.5H15M10.5 6.5V14.5" stroke="#444746" stroke-width="1.8"/></svg>
<svg style="left:779.5px;top:196px" width="16" height="16" viewBox="0 0 16 16"><rect x="0.8" y="0.8" width="14.4" height="14.4" rx="1.2" fill="none" stroke="#444746" stroke-width="1.6"/><path d="M3.5 11L5.5 8.5L7 10.2L9 7.5L12.5 11Z" fill="#444746"/></svg>
<div class="a" style="left:815px;top:189px;width:32px;height:29.5px;background:#e8f0fe;border-radius:4px"></div>
<svg style="left:819.2px;top:194px" width="21.6" height="21.6" viewBox="0 0 24 24"><path d="M16.56 8.94L7.62 0 6.21 1.41l2.38 2.38-5.15 5.15c-.59.59-.59 1.54 0 2.12l5.5 5.5c.29.29.68.44 1.06.44s.77-.15 1.06-.44l5.5-5.5c.59-.58.59-1.53 0-2.12zM5.21 10L10 5.21 14.79 10H5.21zM19 11.5s-2 2.170-2 3.5c0 1.1.9 2 2 2s2-.9 2-2c0-1.33-2-3.5-2-3.5z" fill="#1a73e8"/></svg>
<svg style="left:853px;top:194.5px" width="25" height="21" viewBox="0 0 25 21"><path d="M4.5 12.5L13.5 3.5L16 6L7 15H4.5Z" fill="#444746"/><path d="M14.5 2.5L16 1L18.5 3.5L17 5Z" fill="#444746"/><rect x="0" y="16.5" width="25" height="4.3" fill="#000"/></svg>
<svg style="left:891px;top:197px" width="16" height="14" viewBox="0 0 16 14"><rect x="0" y="0" width="16" height="4" fill="#444746"/><rect x="0" y="6.5" width="16" height="2" fill="#444746"/><rect x="0" y="12" width="16" height="1.3" fill="#9aa0a6"/></svg>
<svg style="left:925px;top:197.5px" width="16" height="12" viewBox="0 0 16 12"><rect x="0" y="0" width="16" height="1.8" fill="#444746"/><rect x="0" y="5" width="6" height="1.8" fill="#444746"/><rect x="9" y="5" width="7" height="1.8" fill="#444746"/><rect x="0.5" y="9.8" width="2" height="2" fill="#444746"/><rect x="5" y="9.8" width="2" height="2" fill="#444746"/><rect x="9.5" y="9.8" width="2" height="2" fill="#444746"/><rect x="14" y="9.8" width="2" height="2" fill="#444746"/></svg>
<div class="t" style="left:975.5px;top:196px;font-size:14px;color:#3c4043" id="arial">Arial</div>
<svg style="left:1067px;top:202px" width="9" height="5" viewBox="0 0 9 5"><path d="M0 0H9L4.5 5Z" fill="#444746"/></svg>
<div class="a" style="left:1090.5px;top:202.5px;width:3px;height:3px;border-radius:50%;background:#444746;box-shadow:6px 0 0 #444746,12px 0 0 #444746"></div>
<div class="a" style="left:387px;top:226px;width:825.5px;height:1px;background:#dadce0"></div>
<div class="a" style="left:387px;top:241.5px;width:825.5px;height:1.5px;background:#dadce0"></div>
<div class="a" style="left:388px;top:227px;width:14.5px;height:14.5px;background:#f8f9fa"></div>
<div class="a" style="left:402.5px;top:227px;width:7.5px;height:14.5px;background:#e8eaed"></div>
<div class="a" style="left:388px;top:241.5px;width:14.5px;height:3px;background:#e8eaed"></div>
<div class="a" style="left:402.5px;top:241.5px;width:1.5px;height:601px;background:#dadce0"></div>
<div class="a" style="left:404px;top:243px;width:809px;height:599.5px;background:#f8f9fa"></div>
<div class="a" style="left:408.2px;top:243.3px;width:798.6px;height:599.2px;background:conic-gradient(#fff 25%,#f6f6f6 0 50%,#fff 0 75%,#f6f6f6 0);background-size:36.67px 36.63px"></div>
<div class="a" style="left:421.0px;top:232.5px;width:1px;height:4px;background:#bdc1c6"></div>
<div class="a" style="left:434.3px;top:232.5px;width:1px;height:4px;background:#bdc1c6"></div>
<div class="a" style="left:447.7px;top:232.5px;width:1px;height:4px;background:#bdc1c6"></div>
<div class="a" style="left:461.0px;top:230.5px;width:1px;height:8px;background:#bdc1c6"></div>
<div class="a" style="left:474.3px;top:232.5px;width:1px;height:4px;background:#bdc1c6"></div>
<div class="a" style="left:487.6px;top:232.5px;width:1px;height:4px;background:#bdc1c6"></div>
<div class="a" style="left:501.0px;top:232.5px;width:1px;height:4px;background:#bdc1c6"></div>
<div class="t" style="left:511.6px;top:229.5px;font-size:11px;color:#3c4043">1</div>
<div class="a" style="left:527.6px;top:232.5px;width:1px;height:4px;background:#bdc1c6"></div>
<div class="a" style="left:541.0px;top:232.5px;width:1px;height:4px;background:#bdc1c6"></div>
<div class="a" style="left:554.3px;top:232.5px;width:1px;height:4px;background:#bdc1c6"></div>
<div class="a" style="left:567.6px;top:230.5px;width:1px;height:8px;background:#bdc1c6"></div>
<div class="a" style="left:580.9px;top:232.5px;width:1px;height:4px;background:#bdc1c6"></div>
<div class="a" style="left:594.2px;top:232.5px;width:1px;height:4px;background:#bdc1c6"></div>
<div class="a" style="left:607.6px;top:232.5px;width:1px;height:4px;background:#bdc1c6"></div>
<div class="t" style="left:618.2px;top:229.5px;font-size:11px;color:#3c4043">2</div>
<div class="a" style="left:634.2px;top:232.5px;width:1px;height:4px;background:#bdc1c6"></div>
<div class="a" style="left:647.5px;top:232.5px;width:1px;height:4px;background:#bdc1c6"></div>
<div class="a" style="left:660.9px;top:232.5px;width:1px;height:4px;background:#bdc1c6"></div>
<div class="a" style="left:674.2px;top:230.5px;width:1px;height:8px;background:#bdc1c6"></div>
<div class="a" style="left:687.5px;top:232.5px;width:1px;height:4px;background:#bdc1c6"></div>
<div class="a" style="left:700.8px;top:232.5px;width:1px;height:4px;background:#bdc1c6"></div>
<div class="a" style="left:714.2px;top:232.5px;width:1px;height:4px;background:#bdc1c6"></div>
<div class="t" style="left:724.8px;top:229.5px;font-size:11px;color:#3c4043">3</div>
<div class="a" style="left:740.8px;top:232.5px;width:1px;height:4px;background:#bdc1c6"></div>
<div class="a" style="left:754.1px;top:232.5px;width:1px;height:4px;background:#bdc1c6"></div>
<div class="a" style="left:767.5px;top:232.5px;width:1px;height:4px;background:#bdc1c6"></div>
<div class="a" style="left:780.8px;top:230.5px;width:1px;height:8px;background:#bdc1c6"></div>
<div class="a" style="left:794.1px;top:232.5px;width:1px;height:4px;background:#bdc1c6"></div>
<div class="a" style="left:807.5px;top:232.5px;width:1px;height:4px;background:#bdc1c6"></div>
<div class="a" style="left:820.8px;top:232.5px;width:1px;height:4px;background:#bdc1c6"></div>
<div class="t" style="left:831.4px;top:229.5px;font-size:11px;color:#3c4043">4</div>
<div class="a" style="left:847.4px;top:232.5px;width:1px;height:4px;background:#bdc1c6"></div>
<div class="a" style="left:860.8px;top:232.5px;width:1px;height:4px;background:#bdc1c6"></div>
<div class="a" style="left:874.1px;top:232.5px;width:1px;height:4px;background:#bdc1c6"></div>
<div class="a" style="left:887.4px;top:230.5px;width:1px;height:8px;background:#bdc1c6"></div>
<div class="a" style="left:900.7px;top:232.5px;width:1px;height:4px;background:#bdc1c6"></div>
<div class="a" style="left:914.0px;top:232.5px;width:1px;height:4px;background:#bdc1c6"></div>
<div class="a" style="left:927.4px;top:232.5px;width:1px;height:4px;background:#bdc1c6"></div>
<div class="t" style="left:938.0px;top:229.5px;font-size:11px;color:#3c4043">5</div>
<div class="a" style="left:954.0px;top:232.5px;width:1px;height:4px;background:#bdc1c6"></div>
<div class="a" style="left:967.3px;top:232.5px;width:1px;height:4px;background:#bdc1c6"></div>
<div class="a" style="left:980.7px;top:232.5px;width:1px;height:4px;background:#bdc1c6"></div>
<div class="a" style="left:994.0px;top:230.5px;width:1px;height:8px;background:#bdc1c6"></div>
<div class="a" style="left:1007.3px;top:232.5px;width:1px;height:4px;background:#bdc1c6"></div>
<div class="a" style="left:1020.6px;top:232.5px;width:1px;height:4px;background:#bdc1c6"></div>
<div class="a" style="left:1034.0px;top:232.5px;width:1px;height:4px;background:#bdc1c6"></div>
<div class="t" style="left:1044.6px;top:229.5px;font-size:11px;color:#3c4043">6</div>
<div class="a" style="left:1060.6px;top:232.5px;width:1px;height:4px;background:#bdc1c6"></div>
<div class="a" style="left:1074.0px;top:232.5px;width:1px;height:4px;background:#bdc1c6"></div>
<div class="a" style="left:1087.3px;top:232.5px;width:1px;height:4px;background:#bdc1c6"></div>
<div class="a" style="left:1100.6px;top:230.5px;width:1px;height:8px;background:#bdc1c6"></div>
<div class="a" style="left:1113.9px;top:232.5px;width:1px;height:4px;background:#bdc1c6"></div>
<div class="a" style="left:1127.2px;top:232.5px;width:1px;height:4px;background:#bdc1c6"></div>
<div class="a" style="left:1140.6px;top:232.5px;width:1px;height:4px;background:#bdc1c6"></div>
<div class="t" style="left:1151.2px;top:229.5px;font-size:11px;color:#3c4043">7</div>
<div class="a" style="left:1167.2px;top:232.5px;width:1px;height:4px;background:#bdc1c6"></div>
<div class="a" style="left:1180.5px;top:232.5px;width:1px;height:4px;background:#bdc1c6"></div>
<div class="a" style="left:1193.9px;top:232.5px;width:1px;height:4px;background:#bdc1c6"></div>
<div class="a" style="left:1207.2px;top:230.5px;width:1px;height:8px;background:#bdc1c6"></div>
<div class="a" style="left:393.5px;top:256.4px;width:4px;height:1px;background:#bdc1c6"></div>
<div class="a" style="left:393.5px;top:269.8px;width:4px;height:1px;background:#bdc1c6"></div>
<div class="a" style="left:393.5px;top:283.1px;width:4px;height:1px;background:#bdc1c6"></div>
<div class="a" style="left:391.5px;top:296.4px;width:8px;height:1px;background:#bdc1c6"></div>
<div class="a" style="left:393.5px;top:309.7px;width:4px;height:1px;background:#bdc1c6"></div>
<div class="a" style="left:393.5px;top:323.0px;width:4px;height:1px;background:#bdc1c6"></div>
<div class="a" style="left:393.5px;top:336.4px;width:4px;height:1px;background:#bdc1c6"></div>
<div class="t" style="left:389.5px;top:344.7px;width:11px;text-align:center;font-size:11px;color:#3c4043;transform:rotate(-90deg)">1</div>
<div class="a" style="left:393.5px;top:363.0px;width:4px;height:1px;background:#bdc1c6"></div>
<div class="a" style="left:393.5px;top:376.4px;width:4px;height:1px;background:#bdc1c6"></div>
<div class="a" style="left:393.5px;top:389.7px;width:4px;height:1px;background:#bdc1c6"></div>
<div class="a" style="left:391.5px;top:403.0px;width:8px;height:1px;background:#bdc1c6"></div>
<div class="a" style="left:393.5px;top:416.3px;width:4px;height:1px;background:#bdc1c6"></div>
<div class="a" style="left:393.5px;top:429.6px;width:4px;height:1px;background:#bdc1c6"></div>
<div class="a" style="left:393.5px;top:443.0px;width:4px;height:1px;background:#bdc1c6"></div>
<div class="t" style="left:389.5px;top:451.3px;width:11px;text-align:center;font-size:11px;color:#3c4043;transform:rotate(-90deg)">2</div>
<div class="a" style="left:393.5px;top:469.6px;width:4px;height:1px;background:#bdc1c6"></div>
<div class="a" style="left:393.5px;top:482.9px;width:4px;height:1px;background:#bdc1c6"></div>
<div class="a" style="left:393.5px;top:496.3px;width:4px;height:1px;background:#bdc1c6"></div>
<div class="a" style="left:391.5px;top:509.6px;width:8px;height:1px;background:#bdc1c6"></div>
<div class="a" style="left:393.5px;top:522.9px;width:4px;height:1px;background:#bdc1c6"></div>
<div class="a" style="left:393.5px;top:536.2px;width:4px;height:1px;background:#bdc1c6"></div>
<div class="a" style="left:393.5px;top:549.6px;width:4px;height:1px;background:#bdc1c6"></div>
<div class="t" style="left:389.5px;top:557.9px;width:11px;text-align:center;font-size:11px;color:#3c4043;transform:rotate(-90deg)">3</div>
<div class="a" style="left:393.5px;top:576.2px;width:4px;height:1px;background:#bdc1c6"></div>
<div class="a" style="left:393.5px;top:589.5px;width:4px;height:1px;background:#bdc1c6"></div>
<div class="a" style="left:393.5px;top:602.9px;width:4px;height:1px;background:#bdc1c6"></div>
<div class="a" style="left:391.5px;top:616.2px;width:8px;height:1px;background:#bdc1c6"></div>
<div class="a" style="left:393.5px;top:629.5px;width:4px;height:1px;background:#bdc1c6"></div>
<div class="a" style="left:393.5px;top:642.9px;width:4px;height:1px;background:#bdc1c6"></div>
<div class="a" style="left:393.5px;top:656.2px;width:4px;height:1px;background:#bdc1c6"></div>
<div class="t" style="left:389.5px;top:664.5px;width:11px;text-align:center;font-size:11px;color:#3c4043;transform:rotate(-90deg)">4</div>
<div class="a" style="left:393.5px;top:682.8px;width:4px;height:1px;background:#bdc1c6"></div>
<div class="a" style="left:393.5px;top:696.1px;width:4px;height:1px;background:#bdc1c6"></div>
<div class="a" style="left:393.5px;top:709.5px;width:4px;height:1px;background:#bdc1c6"></div>
<div class="a" style="left:391.5px;top:722.8px;width:8px;height:1px;background:#bdc1c6"></div>
<div class="a" style="left:393.5px;top:736.1px;width:4px;height:1px;background:#bdc1c6"></div>
<div class="a" style="left:393.5px;top:749.4px;width:4px;height:1px;background:#bdc1c6"></div>
<div class="a" style="left:393.5px;top:762.8px;width:4px;height:1px;background:#bdc1c6"></div>
<div class="t" style="left:389.5px;top:771.1px;width:11px;text-align:center;font-size:11px;color:#3c4043;transform:rotate(-90deg)">5</div>
<div class="a" style="left:393.5px;top:789.4px;width:4px;height:1px;background:#bdc1c6"></div>
<div class="a" style="left:393.5px;top:802.8px;width:4px;height:1px;background:#bdc1c6"></div>
<div class="a" style="left:393.5px;top:816.1px;width:4px;height:1px;background:#bdc1c6"></div>
<div class="a" style="left:391.5px;top:829.4px;width:8px;height:1px;background:#bdc1c6"></div>
<svg style="left:0;top:0" width="1600" height="900" viewBox="0 0 1600 900"><circle cx="681.5" cy="461.2" r="158" fill="none" stroke="#afcdf7" stroke-width="6"/><circle cx="681.5" cy="461.2" r="158" fill="none" stroke="#000" stroke-width="1.2"/><path d="M523.5 303.2H840M523.5 303.2V619.2M523.5 619.2H840M840 303.2V619.2M682 303.2V276" fill="none" stroke="#1a73e8" stroke-width="1.2"/><circle cx="682" cy="275.5" r="4" fill="#1a73e8"/><rect x="519.5" y="299.2" width="8" height="8" fill="#1a73e8"/><rect x="678" y="299.2" width="8" height="8" fill="#1a73e8"/><rect x="836" y="299.2" width="8" height="8" fill="#1a73e8"/><rect x="519.5" y="457.2" width="8" height="8" fill="#1a73e8"/><rect x="836" y="457.2" width="8" height="8" fill="#1a73e8"/><rect x="519.5" y="615.2" width="8" height="8" fill="#1a73e8"/><rect x="678" y="615.2" width="8" height="8" fill="#1a73e8"/><rect x="836" y="615.2" width="8" height="8" fill="#1a73e8"/></svg>
<div class="a" style="left:815px;top:219px;width:275px;height:388.5px;background:#fff;border-radius:8px;box-shadow:0 2px 6px 2px rgba(60,64,67,.15),0 1px 2px rgba(60,64,67,.3)"></div>
<div class="t" style="left:862.5px;top:239px;font-size:16px;color:#202124" id="solid">Solid</div>
<div class="t" style="left:953px;top:239px;font-size:16px;letter-spacing:0.41px;color:#5f6368" id="gradient">Gradient</div>
<div class="a" style="left:828px;top:262.5px;width:104.5px;height:2px;background:#d93025"></div>
<div class="t" style="left:833.5px;top:282px;font-size:12px;color:#3c4043;letter-spacing:0.55px" id="custom">CUSTOM</div>
<svg style="left:831px;top:306px" width="18" height="18" viewBox="0 0 18 18"><circle cx="9" cy="9" r="8" fill="none" stroke="#5f6368" stroke-width="1.5"/><path d="M9 4.5V13.5M4.5 9H13.5" stroke="#5f6368" stroke-width="1.5"/></svg>
<div class="a" style="left:828px;top:338px;width:249px;height:1px;background:#dadce0"></div>
<svg style="left:0;top:0" width="1600" height="900" viewBox="0 0 1600 900"><circle cx="839.80" cy="362.70" r="11" fill="#000000" stroke="rgba(0,0,0,0.1)" stroke-width="0.8"/><circle cx="864.72" cy="362.70" r="11" fill="#434343" stroke="rgba(0,0,0,0.1)" stroke-width="0.8"/><circle cx="889.64" cy="362.70" r="11" fill="#666666" stroke="rgba(0,0,0,0.1)" stroke-width="0.8"/><circle cx="914.56" cy="362.70" r="11" fill="#999999" stroke="rgba(0,0,0,0.1)" stroke-width="0.8"/><circle cx="939.48" cy="362.70" r="11" fill="#b7b7b7" stroke="rgba(0,0,0,0.1)" stroke-width="0.8"/><circle cx="964.40" cy="362.70" r="11" fill="#cccccc" stroke="rgba(0,0,0,0.1)" stroke-width="0.8"/><circle cx="989.32" cy="362.70" r="11" fill="#d9d9d9" stroke="rgba(0,0,0,0.1)" stroke-width="0.8"/><circle cx="1014.24" cy="362.70" r="11" fill="#efefef" stroke="rgba(0,0,0,0.1)" stroke-width="0.8"/><circle cx="1039.16" cy="362.70" r="11" fill="#f3f3f3" stroke="rgba(0,0,0,0.1)" stroke-width="0.8"/><circle cx="1064.08" cy="362.70" r="11" fill="#ffffff" stroke="rgba(0,0,0,0.1)" stroke-width="0.8"/><circle cx="839.80" cy="387.68" r="11" fill="#980000" stroke="rgba(0,0,0,0.1)" stroke-width="0.8"/><circle cx="864.72" cy="387.68" r="11" fill="#ff0000" stroke="rgba(0,0,0,0.1)" stroke-width="0.8"/><circle cx="889.64" cy="387.68" r="11" fill="#ff9900" stroke="rgba(0,0,0,0.1)" stroke-width="0.8"/><circle cx="914.56" cy="387.68" r="11" fill="#ffff00" stroke="rgba(0,0,0,0.1)" stroke-width="0.8"/><circle cx="939.48" cy="387.68" r="11" fill="#00ff00" stroke="rgba(0,0,0,0.1)" stroke-width="0.8"/><circle cx="964.40" cy="387.68" r="11" fill="#00ffff" stroke="rgba(0,0,0,0.1)" stroke-width="0.8"/><circle cx="989.32" cy="387.68" r="11" fill="#4a86e8" stroke="rgba(0,0,0,0.1)" stroke-width="0.8"/><circle cx="1014.24" cy="387.68" r="11" fill="#0000ff" stroke="rgba(0,0,0,0.1)" stroke-width="0.8"/><circle cx="1039.16" cy="387.68" r="11" fill="#9900ff" stroke="rgba(0,0,0,0.1)" stroke-width="0.8"/><circle cx="1064.08" cy="387.68" r="11" fill="#ff00ff" stroke="rgba(0,0,0,0.1)" stroke-width="0.8"/><circle cx="839.80" cy="412.66" r="11" fill="#e6b8af" stroke="rgba(0,0,0,0.1)" stroke-width="0.8"/><circle cx="864.72" cy="412.66" r="11" fill="#f4cccc" stroke="rgba(0,0,0,0.1)" stroke-width="0.8"/><circle cx="889.64" cy="412.66" r="11" fill="#fce5cd" stroke="rgba(0,0,0,0.1)" stroke-width="0.8"/><circle cx="914.56" cy="412.66" r="11" fill="#fff2cc" stroke="rgba(0,0,0,0.1)" stroke-width="0.8"/><circle cx="939.48" cy="412.66" r="11" fill="#d9ead3" stroke="rgba(0,0,0,0.1)" stroke-width="0.8"/><circle cx="964.40" cy="412.66" r="11" fill="#d0e0e3" stroke="rgba(0,0,0,0.1)" stroke-width="0.8"/><circle cx="989.32" cy="412.66" r="11" fill="#c9daf8" stroke="rgba(0,0,0,0.1)" stroke-width="0.8"/><circle cx="1014.24" cy="412.66" r="11" fill="#cfe2f3" stroke="rgba(0,0,0,0.1)" stroke-width="0.8"/><circle cx="1039.16" cy="412.66" r="11" fill="#d9d2e9" stroke="rgba(0,0,0,0.1)" stroke-width="0.8"/><circle cx="1064.08" cy="412.66" r="11" fill="#ead1dc" stroke="rgba(0,0,0,0.1)" stroke-width="0.8"/><circle cx="839.80" cy="437.64" r="11" fill="#dd7e6b" stroke="rgba(0,0,0,0.1)" stroke-width="0.8"/><circle cx="864.72" cy="437.64" r="11" fill="#ea9999" stroke="rgba(0,0,0,0.1)" stroke-width="0.8"/><circle cx="889.64" cy="437.64" r="11" fill="#f9cb9c" stroke="rgba(0,0,0,0.1)" stroke-width="0.8"/><circle cx="914.56" cy="437.64" r="11" fill="#ffe599" stroke="rgba(0,0,0,0.1)" stroke-width="0.8"/><circle cx="939.48" cy="437.64" r="11" fill="#b6d7a8" stroke="rgba(0,0,0,0.1)" stroke-width="0.8"/><circle cx="964.40" cy="437.64" r="11" fill="#a2c4c9" stroke="rgba(0,0,0,0.1)" stroke-width="0.8"/><circle cx="989.32" cy="437.64" r="11" fill="#a4c2f4" stroke="rgba(0,0,0,0.1)" stroke-width="0.8"/><circle cx="1014.24" cy="437.64" r="11" fill="#9fc5e8" stroke="rgba(0,0,0,0.1)" stroke-width="0.8"/><circle cx="1039.16" cy="437.64" r="11" fill="#b4a7d6" stroke="rgba(0,0,0,0.1)" stroke-width="0.8"/><circle cx="1064.08" cy="437.64" r="11" fill="#d5a6bd" stroke="rgba(0,0,0,0.1)" stroke-width="0.8"/><circle cx="839.80" cy="462.62" r="11" fill="#cc4125" stroke="rgba(0,0,0,0.1)" stroke-width="0.8"/><circle cx="864.72" cy="462.62" r="11" fill="#e06666" stroke="rgba(0,0,0,0.1)" stroke-width="0.8"/><circle cx="889.64" cy="462.62" r="11" fill="#f6b26b" stroke="rgba(0,0,0,0.1)" stroke-width="0.8"/><circle cx="914.56" cy="462.62" r="11" fill="#ffd966" stroke="rgba(0,0,0,0.1)" stroke-width="0.8"/><circle cx="939.48" cy="462.62" r="11" fill="#93c47d" stroke="rgba(0,0,0,0.1)" stroke-width="0.8"/><circle cx="964.40" cy="462.62" r="11" fill="#76a5af" stroke="rgba(0,0,0,0.1)" stroke-width="0.8"/><circle cx="989.32" cy="462.62" r="11" fill="#6d9eeb" stroke="rgba(0,0,0,0.1)" stroke-width="0.8"/><circle cx="1014.24" cy="462.62" r="11" fill="#6fa8dc" stroke="rgba(0,0,0,0.1)" stroke-width="0.8"/><circle cx="1039.16" cy="462.62" r="11" fill="#8e7cc3" stroke="rgba(0,0,0,0.1)" stroke-width="0.8"/><circle cx="1064.08" cy="462.62" r="11" fill="#c27ba0" stroke="rgba(0,0,0,0.1)" stroke-width="0.8"/><circle cx="839.80" cy="487.60" r="11" fill="#a61c00" stroke="rgba(0,0,0,0.1)" stroke-width="0.8"/><circle cx="864.72" cy="487.60" r="11" fill="#cc0000" stroke="rgba(0,0,0,0.1)" stroke-width="0.8"/><circle cx="889.64" cy="487.60" r="11" fill="#e69138" stroke="rgba(0,0,0,0.1)" stroke-width="0.8"/><circle cx="914.56" cy="487.60" r="11" fill="#f1c232" stroke="rgba(0,0,0,0.1)" stroke-width="0.8"/><circle cx="939.48" cy="487.60" r="11" fill="#6aa84f" stroke="rgba(0,0,0,0.1)" stroke-width="0.8"/><circle cx="964.40" cy="487.60" r="11" fill="#45818e" stroke="rgba(0,0,0,0.1)" stroke-width="0.8"/><circle cx="989.32" cy="487.60" r="11" fill="#3c78d8" stroke="rgba(0,0,0,0.1)" stroke-width="0.8"/><circle cx="1014.24" cy="487.60" r="11" fill="#3d85c6" stroke="rgba(0,0,0,0.1)" stroke-width="0.8"/><circle cx="1039.16" cy="487.60" r="11" fill="#674ea7" stroke="rgba(0,0,0,0.1)" stroke-width="0.8"/><circle cx="1064.08" cy="487.60" r="11" fill="#a64d79" stroke="rgba(0,0,0,0.1)" stroke-width="0.8"/><circle cx="839.80" cy="512.58" r="11" fill="#85200c" stroke="rgba(0,0,0,0.1)" stroke-width="0.8"/><circle cx="864.72" cy="512.58" r="11" fill="#990000" stroke="rgba(0,0,0,0.1)" stroke-width="0.8"/><circle cx="889.64" cy="512.58" r="11" fill="#b45f06" stroke="rgba(0,0,0,0.1)" stroke-width="0.8"/><circle cx="914.56" cy="512.58" r="11" fill="#bf9000" stroke="rgba(0,0,0,0.1)" stroke-width="0.8"/><circle cx="939.48" cy="512.58" r="11" fill="#38761d" stroke="rgba(0,0,0,0.1)" stroke-width="0.8"/><circle cx="964.40" cy="512.58" r="11" fill="#134f5c" stroke="rgba(0,0,0,0.1)" stroke-width="0.8"/><circle cx="989.32" cy="512.58" r="11" fill="#1155cc" stroke="rgba(0,0,0,0.1)" stroke-width="0.8"/><circle cx="1014.24" cy="512.58" r="11" fill="#0b5394" stroke="rgba(0,0,0,0.1)" stroke-width="0.8"/><circle cx="1039.16" cy="512.58" r="11" fill="#351c75" stroke="rgba(0,0,0,0.1)" stroke-width="0.8"/><circle cx="1064.08" cy="512.58" r="11" fill="#741b47" stroke="rgba(0,0,0,0.1)" stroke-width="0.8"/><circle cx="839.80" cy="537.56" r="11" fill="#5b0f00" stroke="rgba(0,0,0,0.1)" stroke-width="0.8"/><circle cx="864.72" cy="537.56" r="11" fill="#660000" stroke="rgba(0,0,0,0.1)" stroke-width="0.8"/><circle cx="889.64" cy="537.56" r="11" fill="#783f04" stroke="rgba(0,0,0,0.1)" stroke-width="0.8"/><circle cx="914.56" cy="537.56" r="11" fill="#7f6000" stroke="rgba(0,0,0,0.1)" stroke-width="0.8"/><circle cx="939.48" cy="537.56" r="11" fill="#274e13" stroke="rgba(0,0,0,0.1)" stroke-width="0.8"/><circle cx="964.40" cy="537.56" r="11" fill="#0c343d" stroke="rgba(0,0,0,0.1)" stroke-width="0.8"/><circle cx="989.32" cy="537.56" r="11" fill="#1c4587" stroke="rgba(0,0,0,0.1)" stroke-width="0.8"/><circle cx="1014.24" cy="537.56" r="11" fill="#073763" stroke="rgba(0,0,0,0.1)" stroke-width="0.8"/><circle cx="1039.16" cy="537.56" r="11" fill="#20124d" stroke="rgba(0,0,0,0.1)" stroke-width="0.8"/><circle cx="1064.08" cy="537.56" r="11" fill="#4c1130" stroke="rgba(0,0,0,0.1)" stroke-width="0.8"/></svg>
<div class="a" style="left:827.5px;top:562.5px;width:249.5px;height:32px;background:#f1f3f4;border:1px solid #dadce0;border-radius:16px"></div>
<svg style="left:897px;top:568.7px" width="23" height="23" viewBox="0 0 24 24"><path d="M18 14c0-4-6-10.8-6-10.8s-1.33 1.51-2.73 3.52l8.590 8.590c.09-.42.14-.86.14-1.31zm-.88 3.120L12.5 12.5 5.27 5.27 4 6.55l3.32 3.32C6.55 11.32 6 12.79 6 14c0 3.31 2.69 6 6 6 1.52 0 2.9-.57 3.96-1.5l2.63 2.63 1.27-1.27-2.74-2.74z" fill="#5f6368"/></svg>
<div class="t" style="left:920px;top:570px;font-size:15.5px;letter-spacing:0.25px;color:#3c4043" id="transp">Transparent</div>
<div class="a" style="left:0;top:858px;width:1600px;height:42px;background:#1d1b1b"></div>
<div class="a" style="left:0;top:858px;width:50px;height:42px;background:#1a1818"></div>
<svg style="left:16px;top:870px" width="19" height="19" viewBox="0 0 19 19"><path d="M0 2.6L7.7 1.5V8.8H0Z M8.7 1.4L19 0V8.8H8.7Z M0 9.8H7.7V17.2L0 16.1Z M8.7 9.8H19V18.7L8.7 17.3Z" fill="#fff"/></svg>
<div class="a" style="left:51px;top:859px;width:357px;height:39px;background:#333;border-right:1px solid #444"></div>
<svg style="left:63px;top:868px" width="22" height="22" viewBox="0 0 22 22"><circle cx="13.5" cy="8" r="6.5" fill="none" stroke="#fff" stroke-width="1.4"/><path d="M9 12.8L1.5 20.5" stroke="#fff" stroke-width="1.4"/></svg>
<div class="t" style="left:97px;top:871px;font-size:15.3px;color:#e6e6e6" id="search">Type here to search</div>
<svg style="left:424px;top:870px" width="19" height="18" viewBox="0 0 19 18"><path d="M1.3 1V17M11.4 1V17M16.2 1V17" stroke="#fff" stroke-width="1.2"/><path d="M1.3 3.8H11.4M1.3 14.2H11.4" stroke="#aaa" stroke-width="1.8"/><rect x="1.3" y="7" width="10.1" height="5" fill="none" stroke="#fff" stroke-width="1.1"/><circle cx="16.2" cy="7.5" r="1.5" fill="#fff"/></svg>
<svg style="left:474px;top:866.5px" width="25" height="26" viewBox="0 0 25 26"><path d="M6.8 4.8V1.5A1 1 0 0 1 7.8 0.5H17.8A1 1 0 0 1 18.8 1.5V4.8" fill="none" stroke="#29a8e8" stroke-width="1.5"/><path d="M1.5 3H23.5A1 1 0 0 1 24.5 4V20.5A4.5 4.5 0 0 1 20 25H5A4.5 4.5 0 0 1 0.5 20.5V4A1 1 0 0 1 1.5 3Z" fill="#f4f4f4"/><rect x="8" y="9.5" width="3.8" height="3.8" fill="#f25022"/><rect x="13" y="9.5" width="3.8" height="3.8" fill="#7fba00"/><rect x="8" y="14.5" width="3.8" height="3.8" fill="#00a4ef"/><rect x="13" y="14.5" width="3.8" height="3.8" fill="#ffb900"/></svg>
<svg style="left:525px;top:865.5px" width="26" height="26" viewBox="0 0 26 26"><defs><linearGradient id="eg" x1="0.1" y1="0.9" x2="0.9" y2="0.1"><stop offset="0" stop-color="#0c59a4"/><stop offset="0.55" stop-color="#1b8de0"/><stop offset="1" stop-color="#55d977"/></linearGradient></defs><circle cx="13" cy="13" r="12.8" fill="url(#eg)"/><path d="M0.5 13C1 21 8 26 14 25.8C9 24 6.5 19.5 8 15.5L12 14Z" fill="#0f4f9a"/><ellipse cx="12.3" cy="14.2" rx="4.6" ry="4.2" fill="#1d1b1b"/><path d="M12.5 10C16 10 17.5 12 17.5 14.5C16 15.8 14 15.6 13 14.5C13.5 13 13 11 12.5 10Z" fill="#1a88dc"/></svg>
<svg style="left:578.5px;top:869.5px" width="24" height="20" viewBox="0 0 24 20"><path d="M0.5 1.5A1 1 0 0 1 1.5 0.5H8.5L10 2.5H22.5A1 1 0 0 1 23.5 3.5V18A1 1 0 0 1 22.5 19H1.5A1 1 0 0 1 0.5 18Z" fill="#e9a822"/><path d="M0.5 4H23.5V18A1 1 0 0 1 22.5 19H1.5A1 1 0 0 1 0.5 18Z" fill="#fcd462"/><path d="M4.5 19V10A1.5 1.5 0 0 1 6 8.5H18A1.5 1.5 0 0 1 19.5 10V19H16.5V12H7.5V19Z" fill="#3d94e0"/></svg>
<svg style="left:628.5px;top:866.5px" width="26" height="25" viewBox="0 0 26 25"><path d="M0.5 9L13 0.5L25.5 9V24.5H0.5Z" fill="#0a62bf"/><path d="M2.5 8H23.5L13 15Z" fill="#f2f2f2"/><path d="M0.5 9L13 16L25.5 9V24.5H0.5Z" fill="#2fa5ee"/><path d="M25.5 9V24.5H14L18 15Z" fill="#50c0f7"/><path d="M0.5 24.5L13 16L25.5 24.5Z" fill="#1f8fe0" opacity="0.6"/></svg>
<svg style="left:682px;top:866.5px" width="20" height="25" viewBox="0 0 20 25"><defs><linearGradient id="og" x1="0" y1="0" x2="1" y2="1"><stop offset="0" stop-color="#d82b3c"/><stop offset="0.6" stop-color="#e8401c"/><stop offset="1" stop-color="#f27a22"/></linearGradient></defs><path d="M0.5 5L13 0.5L19.5 3V22L13 24.5L0.5 20.5L13 21.5V4L5.5 6.2V18.5L0.5 20.5Z" fill="url(#og)"/><path d="M13 0.5L19.5 3V22L13 24.5Z" fill="#ef6a1d"/></svg>
<div class="a" style="left:772px;top:858px;width:50px;height:42px;background:#4a4242"></div>
<svg style="left:733px;top:867px" width="24" height="24" viewBox="0 0 24 24"><path d="M22.4 6A12 12 0 0 0 1.6 6L6.8 15A6 6 0 0 1 12 6Z" fill="#db4437"/><path d="M22.4 6A12 12 0 0 0 1.6 6L6.8 15A6 6 0 0 1 12 6Z" fill="#f4c20d" transform="rotate(120 12 12)"/><path d="M22.4 6A12 12 0 0 0 1.6 6L6.8 15A6 6 0 0 1 12 6Z" fill="#0f9d58" transform="rotate(240 12 12)"/><circle cx="12" cy="12" r="5.6" fill="#fff"/><circle cx="12" cy="12" r="4.5" fill="#4285f4"/><circle cx="18.5" cy="18.6" r="8" fill="#1d1b1b"/><circle cx="18.5" cy="18.6" r="7" fill="#ece8ea"/><ellipse cx="18.5" cy="17" rx="2.8" ry="3.5" fill="#8a6050"/><path d="M12.5 23C14 20.5 23 20.5 24.5 23A7 7 0 0 1 12.5 23Z" fill="#5b5fa8"/></svg>
<svg style="left:785px;top:867px" width="24" height="24" viewBox="0 0 24 24"><path d="M22.4 6A12 12 0 0 0 1.6 6L6.8 15A6 6 0 0 1 12 6Z" fill="#db4437"/><path d="M22.4 6A12 12 0 0 0 1.6 6L6.8 15A6 6 0 0 1 12 6Z" fill="#f4c20d" transform="rotate(120 12 12)"/><path d="M22.4 6A12 12 0 0 0 1.6 6L6.8 15A6 6 0 0 1 12 6Z" fill="#0f9d58" transform="rotate(240 12 12)"/><circle cx="12" cy="12" r="5.6" fill="#fff"/><circle cx="12" cy="12" r="4.5" fill="#4285f4"/><circle cx="18.3" cy="18.6" r="7.8" fill="#8d6e63"/><text x="18.3" y="22.4" font-size="11" font-family="Liberation Sans" fill="#f2ece8" text-anchor="middle">T</text></svg>
<div class="a" style="left:723.5px;top:897px;width:43px;height:3px;background:#76b9ed"></div>
<div class="a" style="left:772px;top:897px;width:50px;height:3px;background:#76b9ed"></div>
<div class="a" style="left:568.5px;top:897px;width:33px;height:3px;background:#76b9ed"></div>
<div class="a" style="left:603px;top:897px;width:8px;height:3px;background:#76b9ed"></div>
<div class="a" style="left:621px;top:897px;width:42px;height:3px;background:#76b9ed"></div>
<svg style="left:1187px;top:868px" width="24" height="22" viewBox="0 0 24 22"><defs><linearGradient id="sg" x1="0" y1="0" x2="1" y2="1"><stop offset="0" stop-color="#fde46a"/><stop offset="1" stop-color="#f9a10e"/></linearGradient><linearGradient id="clg" x1="0" y1="0" x2="0" y2="1"><stop offset="0" stop-color="#e4f3fd"/><stop offset="1" stop-color="#a9d6f5"/></linearGradient></defs><circle cx="11" cy="11" r="10" fill="url(#sg)"/><path d="M10.5 16.2A2.6 2.6 0 0 1 11 11.3A4 4 0 0 1 18.6 10.3A3 3 0 0 1 20.3 16.2Z" fill="url(#clg)"/></svg>
<div class="t" style="left:1219.5px;top:873px;font-size:14px;letter-spacing:-0.6px;color:#fff" id="temp">31°C</div>
<div class="t" style="left:1258px;top:873px;font-size:14.5px;color:#fff" id="sunny">Mostly sunny</div>
<svg style="left:1361px;top:874px" width="13" height="8" viewBox="0 0 13 8"><path d="M0.5 7.5L6.5 1L12.5 7.5" fill="none" stroke="#fff" stroke-width="1.2"/></svg>
<svg style="left:1382px;top:872px" width="20" height="13" viewBox="0 0 20 13"><path d="M4 12.5H16.5A3 3 0 0 0 16.5 6.5A5.5 5.5 0 0 0 6 5A3.8 3.8 0 0 0 4 12.5Z" fill="#fff"/></svg>
<svg style="left:1408px;top:870px" width="17" height="17" viewBox="0 0 17 17"><path d="M1 6H4L8.5 2V15L4 11H1Z" fill="none" stroke="#fff" stroke-width="1.1" stroke-linejoin="round"/><path d="M11 6A3 3 0 0 1 11 11M13 4A6 6 0 0 1 13 13" fill="none" stroke="#fff" stroke-width="1.1"/><path d="M15 2A8.5 8.5 0 0 1 15 15" fill="none" stroke="#888" stroke-width="1.1"/></svg>
<div class="t" style="left:1437px;top:874px;font-size:12.5px;letter-spacing:-0.5px;color:#fff" id="eng">ENG</div>
<div class="t" style="left:1483px;top:864.5px;font-size:12.4px;color:#fff" id="time">4:14 pm</div>
<div class="t" style="left:1474.5px;top:884px;font-size:12.6px;color:#fff" id="date">25/02/2022</div>
<svg style="left:1556px;top:870px" width="28" height="28" viewBox="0 0 28 28"><path d="M1 1H18V16H9.5L7.5 18.5V16H1Z" fill="#fff"/><path d="M4 4.5H14M4 7.5H14M4 11.5H12" stroke="#555" stroke-width="0.9"/><circle cx="17.1" cy="16.7" r="8" fill="#2a2a2a" stroke="#707070" stroke-width="1.2"/><text x="17.3" y="21" font-size="12" font-weight="bold" font-family="Liberation Sans" fill="#fff" text-anchor="middle">2</text></svg>
<div class="a" style="left:1594.5px;top:858px;width:1px;height:42px;background:#6a6a6a"></div>
</body></html>
